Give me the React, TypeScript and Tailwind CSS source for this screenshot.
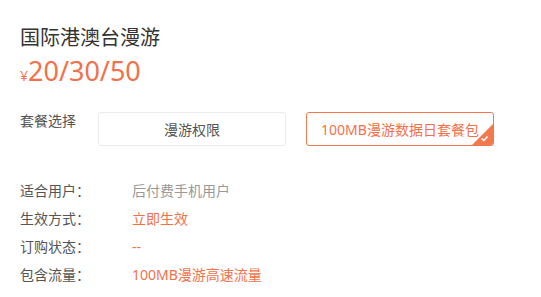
import { useState } from "react";

const font = { fontFamily: '"Noto Sans", "Noto Sans CJK SC", sans-serif' };

const plans = ["漫游权限", "100MB漫游数据日套餐包"];

const details = [
  { label: "适合用户：", value: "后付费手机用户", accent: false },
  { label: "生效方式：", value: "立即生效", accent: true },
  { label: "订购状态：", value: "--", accent: true },
  { label: "包含流量：", value: "100MB漫游高速流量", accent: true },
];

export default function App() {
  const [selected, setSelected] = useState(1);

  return (
    <div className="w-[541px] h-[297px] bg-white pl-[20px] pt-[24px]" style={font}>
      <h1 className="text-[20px] leading-[28px] text-[#333333]">国际港澳台漫游</h1>
      <div className="mt-[1px] flex items-baseline text-[#f2714a]">
        <span className="text-[14px]">¥</span>
        <span className="text-[27px] leading-[36px]">20/30/50</span>
      </div>

      <div className="mt-[23px] flex">
        <div className="w-[78px] text-[14px] leading-[18px] text-[#555555]">套餐选择</div>
        <div className="flex gap-[20px]">
          {plans.map((p, i) => {
            const active = i === selected;
            return (
              <button
                key={p}
                onClick={() => setSelected(i)}
                className={
                  active
                    ? "relative w-[188px] h-[34px] rounded-[3px] border border-[#f2784e] text-[14px] text-[#f2714a] overflow-hidden"
                    : "relative w-[188px] h-[34px] rounded-[3px] border border-[#ebebeb] text-[14px] text-[#555555]"
                }
              >
                {p}
                {active && (
                  <svg className="absolute right-0 bottom-0" width="21" height="21" viewBox="0 0 21 21">
                    <path d="M21 0 L21 21 L0 21 Z" fill="#f2784e" />
                    <path d="M9.5 14.5 L11.8 16.5 L15.5 12.5" stroke="#ffffff" strokeWidth="1.6" fill="none" />
                  </svg>
                )}
              </button>
            );
          })}
        </div>
      </div>

      <div className="mt-[31px] flex flex-col">
        {details.map((d) => (
          <div key={d.label} className="flex text-[14px] leading-[28px]">
            <span className="w-[112px] text-[#555555]">{d.label}</span>
            <span className={d.accent ? "text-[#f2714a]" : "text-[#999999]"}>{d.value}</span>
          </div>
        ))}
      </div>
    </div>
  );
}
